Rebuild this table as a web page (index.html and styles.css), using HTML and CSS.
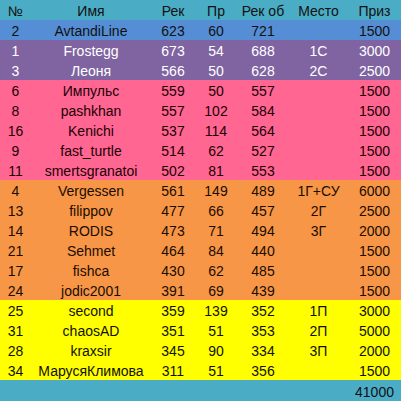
FILE: index.html
```html
<!DOCTYPE html>
<html>
<head>
<meta charset="utf-8">
<link rel="stylesheet" href="styles.css">
</head>
<body>
<table class="sheet">
<colgroup>
<col class="c-num"><col class="c-name"><col class="c-rek"><col class="c-pr"><col class="c-rekob"><col class="c-place"><col class="c-prize">
</colgroup>
<thead>
<tr class="head"><th>№</th><th>Имя</th><th>Рек</th><th>Пр</th><th>Рек об</th><th>Место</th><th>Приз</th></tr>
</thead>
<tbody>
<tr class="blue"><td>2</td><td>AvtandiLine</td><td>623</td><td>60</td><td>721</td><td></td><td>1500</td></tr>
<tr class="purple"><td>1</td><td>Frostegg</td><td>673</td><td>54</td><td>688</td><td>1С</td><td>3000</td></tr>
<tr class="purple"><td>3</td><td>Леоня</td><td>566</td><td>50</td><td>628</td><td>2С</td><td>2500</td></tr>
<tr class="pink"><td>6</td><td>Импульс</td><td>559</td><td>50</td><td>557</td><td></td><td>1500</td></tr>
<tr class="pink"><td>8</td><td>pashkhan</td><td>557</td><td>102</td><td>584</td><td></td><td>1500</td></tr>
<tr class="pink"><td>16</td><td>Kenichi</td><td>537</td><td>114</td><td>564</td><td></td><td>1500</td></tr>
<tr class="pink"><td>9</td><td>fast_turtle</td><td>514</td><td>62</td><td>527</td><td></td><td>1500</td></tr>
<tr class="pink"><td>11</td><td>smertsgranatoi</td><td>502</td><td>81</td><td>553</td><td></td><td>1500</td></tr>
<tr class="orange"><td>4</td><td>Vergessen</td><td>561</td><td>149</td><td>489</td><td>1Г+СУ</td><td>6000</td></tr>
<tr class="orange"><td>13</td><td>filippov</td><td>477</td><td>66</td><td>457</td><td>2Г</td><td>2500</td></tr>
<tr class="orange"><td>14</td><td>RODIS</td><td>473</td><td>71</td><td>494</td><td>3Г</td><td>2000</td></tr>
<tr class="orange"><td>21</td><td>Sehmet</td><td>464</td><td>84</td><td>440</td><td></td><td>1500</td></tr>
<tr class="orange"><td>17</td><td>fishca</td><td>430</td><td>62</td><td>485</td><td></td><td>1500</td></tr>
<tr class="orange"><td>24</td><td>jodic2001</td><td>391</td><td>69</td><td>439</td><td></td><td>1500</td></tr>
<tr class="yellow"><td>25</td><td>second</td><td>359</td><td>139</td><td>352</td><td>1П</td><td>3000</td></tr>
<tr class="yellow"><td>31</td><td>chaosAD</td><td>351</td><td>51</td><td>353</td><td>2П</td><td>5000</td></tr>
<tr class="yellow"><td>28</td><td>kraxsir</td><td>345</td><td>90</td><td>334</td><td>3П</td><td>2000</td></tr>
<tr class="yellow"><td>34</td><td>МарусяКлимова</td><td>311</td><td>51</td><td>356</td><td></td><td>1500</td></tr>
</tbody>
<tfoot>
<tr class="foot"><td></td><td></td><td></td><td></td><td></td><td></td><td>41000</td></tr>
</tfoot>
</table>
</body>
</html>
```
FILE: styles.css
```css
html, body {
  margin: 0;
  padding: 0;
  background: #ffffff;
}
.sheet {
  width: 401px;
  table-layout: fixed;
  border-collapse: collapse;
  border-spacing: 0;
  font-family: "Liberation Sans", Arial, sans-serif;
  font-size: 14px;
  color: #111;
}
.c-num { width: 31px; }
.c-name { width: 120px; }
.c-rek { width: 44px; }
.c-pr { width: 42px; }
.c-rekob { width: 52px; }
.c-place { width: 59px; }
.c-prize { width: 53px; }
.sheet th, .sheet td {
  height: 20px;
  box-sizing: border-box;
  padding: 2px 0 0 0;
  line-height: 18px;
  text-align: center;
  font-weight: normal;
  white-space: nowrap;
  overflow: visible;
}
.head { background: #4bacc6; }
.blue { background: #558ed5; }
.purple { background: #8064a2; color: #ffffff; }
.pink { background: #ff6691; color: #1c0008; }
.orange { background: #f79646; color: #1a0c00; }
.yellow { background: #ffff00; color: #111100; }
.foot { background: #4bacc6; }
.foot td { height: 21px; }
```
